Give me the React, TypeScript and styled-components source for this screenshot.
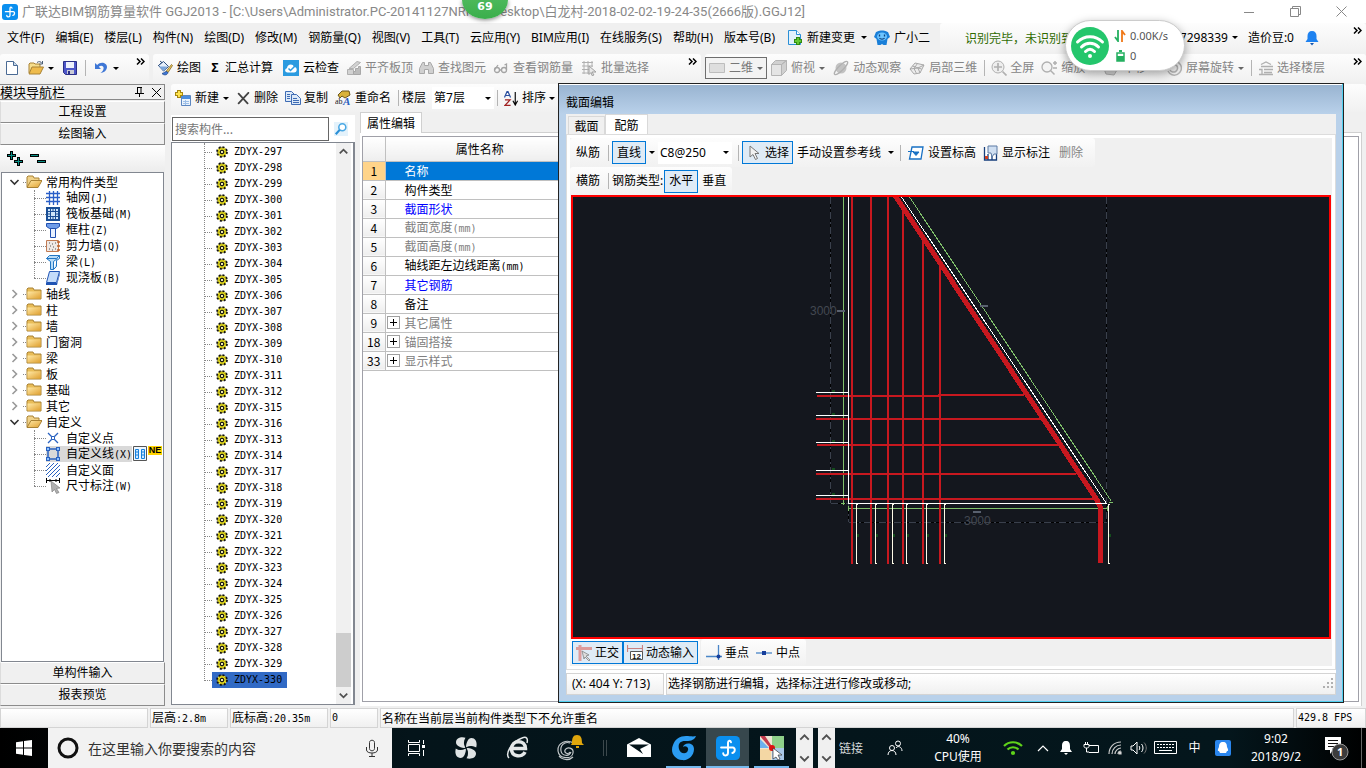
import React from "react";
import styled, { createGlobalStyle, css } from "styled-components";

const sans = `"Noto Sans", "Noto Sans CJK SC", sans-serif`;
const song = `"Noto Sans CJK SC", sans-serif`;

const Global = createGlobalStyle`
  *, *::before, *::after { box-sizing: border-box; }
  body { margin: 0; font: 12px/16px ${sans}; color: #000; background: #f0f0f0; }
  button, input, select { font: inherit; color: inherit; margin: 0; padding: 0; border: 0; background: none; border-radius: 0; }
  ul { list-style: none; margin: 0; padding: 0; }
  svg { display: block; flex: none; }
`;

/* ---------- shared parts ---------- */

const Page = styled.div`
  position: relative;
  display: flex;
  flex-direction: column;
  min-height: 100vh;
  overflow: hidden;
`;

const Mono = styled.span`
  font-family: "DejaVu Sans Mono", monospace;
  font-size: 10px;
`;

const Strip = styled.div<{ $grow?: boolean; $min?: number }>`
  display: flex;
  align-items: center;
  min-width: ${(p) => p.$min ?? 0}px;
  white-space: nowrap;
  background: linear-gradient(#fdfdfd, #f1f1f1);
  border-radius: 3px;
  ${(p) => p.$grow && css`flex: 1;`}
`;

const Tool = styled.button<{ $on?: boolean; $tight?: boolean }>`
  display: flex;
  align-items: center;
  flex: none;
  gap: ${(p) => (p.$tight ? 3 : 4)}px;
  height: 24px;
  padding: 0 ${(p) => (p.$tight ? 3 : 4)}px;
  white-space: nowrap;
  &:disabled { color: #858585; }
  ${(p) =>
    p.$on &&
    css`
      background: #dfebf6;
      border: 1px solid #0078d7;
      height: 23px;
    `}
`;

const Sep = styled.span`
  flex: none;
  width: 1px;
  height: 16px;
  margin: 0 3px;
  background: #b4b4b4;
`;

const Spacer = styled.span`
  flex: 1;
`;

const Gap = styled.span<{ $w: number }>`
  flex: none;
  width: ${(p) => p.$w}px;
`;

const MoreButton = styled.button`
  display: grid;
  place-items: center;
  flex: none;
  align-self: flex-start;
  width: 18px;
  height: 15px;
`;

const More = () => (
  <MoreButton aria-label="更多">
    <svg width="9" height="7" viewBox="0 0 9 7">
      <path d="M1 .5l3 3-3 3M5 .5l3 3-3 3" fill="none" stroke="#000" strokeWidth="1.500" />
    </svg>
  </MoreButton>
);

const Combo = styled.span<{ $w: number; $framed?: boolean }>`
  display: flex;
  align-items: center;
  flex: none;
  width: ${(p) => p.$w}px;
  height: 22px;
  padding-right: 3px;
  background: #fff;
  ${(p) =>
    p.$framed &&
    css`
      background: #f3f3f3;
      border: 1px solid #6e6e6e;
      color: #777;
      padding-left: 3px;
      gap: 2px;
    `}
  select {
    appearance: none;
    flex: 1;
    min-width: 0;
    padding-left: 2px;
    outline: 0;
  }
`;

const Caret = ({ c = "#000" }: { c?: string }) => (
  <svg width="6" height="3" viewBox="0 0 6 3">
    <path d="M0 0h6L3 3z" fill={c} />
  </svg>
);

/* ---------- icons ---------- */

const shapes: Record<string, React.ReactNode> = {
  app: (
    <>
      <rect width="16" height="16" rx="3" fill="#0a8fef" />
      <path d="M10 4.200C9.600 2.700 8 2.900 8 4.500v6.700c0 2.400-3.200 2.200-3.200.3M8 7.700h3.200c1.800 0 1.800 3.200-.3 3.600M8 7.700H3.400" fill="none" stroke="#fff" strokeWidth="1.300" strokeLinecap="round" />
    </>
  ),
  file: (
    <>
      <path d="M2.500 1.500h7l4 4v9h-11z" fill="#fff" stroke="#4a6a94" />
      <path d="M9.500 1.500v4h4" fill="#c8d8ea" stroke="#4a6a94" />
    </>
  ),
  open: (
    <>
      <path d="M1 13V4l1-1h4l1 1h5v3" fill="#f5dd8c" stroke="#a98234" />
      <path d="M1 14l3-7h11.500l-3.500 7z" fill="#eebb4c" stroke="#a98234" />
      <path d="M9 2.500c2-1.500 4-1 5 1M14.500 1v3h-3" fill="none" stroke="#4b5e74" />
    </>
  ),
  save: (
    <>
      <path d="M1.500 1.500h13v13h-11l-2-2z" fill="#4d56c8" stroke="#2b2f86" />
      <path d="M4 2h8v6H4z" fill="#eef1fb" />
      <path d="M5 10h7v4H5z" fill="#c9cbd6" />
      <path d="M6 11h2v3H6z" fill="#2b2f86" />
    </>
  ),
  undo: (
    <path d="M2 3v6h6L5.800 6.800C8 4.500 11.500 6 10.500 9c-.4 1.600-1.500 3-3 4 4-.6 6.500-3 6.500-6 0-4.500-6.500-6-9.800-2z" fill="#3f77d6" />
  ),
  paint: (
    <>
      <path d="M3 1l5 4M1 6l4-4" stroke="#2d4f80" fill="none" />
      <path d="M1.500 5.500l5-4 5 5-5 4.500z" fill="#e6effa" stroke="#2d4f80" />
      <path d="M2 6.500h8.500L6.500 11z" fill="#7ba6dc" />
      <path d="M14.500 4.500l1 1-4.500 7-2-1z" fill="#f0cc62" stroke="#7d6320" strokeWidth=".8" />
      <path d="M5 13.500c2-.5 3-2 4.500-2l1.500 1c-.5 3-4.500 3-6 1z" fill="#3f77d6" stroke="#1d4080" strokeWidth=".7" />
    </>
  ),
  cloud: (
    <>
      <rect width="16" height="16" fill="#2b9be0" />
      <path d="M4.500 12.500c-3 0-3-4-.5-4.200C4 4 10 3 11 7c3.500-.3 3.800 5.500 0 5.500z" fill="#fff" />
      <path d="M5.500 8.500l2 2 4-4" fill="none" stroke="#2b9be0" strokeWidth="1.500" />
    </>
  ),
  align: (
    <>
      <path d="M3 8.500l8-7 3.500 1-7 6zM1.500 9.500h6v5h-6z" fill="#d2d2d2" stroke="#b0b0b0" />
      <path d="M7.500 11.500h2v-3h3v-2h2v8h-7z" fill="#bcbcbc" stroke="#a8a8a8" />
    </>
  ),
  find: (
    <path d="M3.500 2.500h2v3h4v-3h2l3 6v5h-5v-4h-4v4h-5v-5z" fill="#d0d0d0" stroke="#a8a8a8" />
  ),
  glasses: (
    <g fill="none" stroke="#a4a4a4" strokeWidth="1.300">
      <circle cx="4" cy="10" r="2.500" />
      <circle cx="11" cy="10" r="2.500" />
      <path d="M6.500 10h2M1.500 10L5 5M13.500 10V4l-2 1" />
    </g>
  ),
  batch: (
    <>
      <path d="M1 2.500h11M1 6h11M1 9.500h7M1 13h7M3 1v13M7 1v13M11 1v6" stroke="#b0b0b0" fill="none" />
      <path d="M8 6l7 6h-4l2 3-2 .5-1-3-2 2z" fill="#e8e8e8" stroke="#a0a0a0" />
    </>
  ),
  plane: <path d="M.5 3.500h15v9H.5z" fill="#dedede" stroke="#bdbdbd" />,
  cube: (
    <>
      <path d="M.5 4.500h10v11H.5z" fill="#e4e4e4" stroke="#b4b4b4" />
      <path d="M.5 4.500l4-4h11l-5 4zM10.500 4.500l5-4v10l-5 5z" fill="#d0d0d0" stroke="#b4b4b4" />
    </>
  ),
  orbit: (
    <>
      <circle cx="8" cy="8" r="5.500" fill="#c2c2c2" />
      <ellipse cx="8" cy="8" rx="9" ry="2.500" transform="rotate(-45 8 8)" fill="none" stroke="#b0b0b0" strokeWidth="1.300" />
    </>
  ),
  local: (
    <path d="M1 9l5-6 9 2-4 8-6 1zM1 9l8-1 2 5M9 8l6-3M3.500 6l9 3M8.500 3.500L5 8.500l2.500 5" fill="#ececec" stroke="#a9a9a9" />
  ),
  full: (
    <>
      <circle cx="7" cy="7" r="6" fill="#eee" stroke="#b0b0b0" />
      <path d="M7 3v8M3 7h8M11.500 11.500l4 4" stroke="#b0b0b0" strokeWidth="1.700" />
    </>
  ),
  zoom: (
    <>
      <circle cx="6" cy="7" r="5" fill="#f4f4f4" stroke="#b0b0b0" strokeWidth="1.300" />
      <path d="M9.500 10.500l4 4M12 3h4M14 1v4M12 8h4" stroke="#b0b0b0" strokeWidth="1.500" />
    </>
  ),
  pan: <path d="M3 14l-2-5 2-1 2 2V3h2v4h6l1 3-3 5z" fill="#d6d6d6" stroke="#b0b0b0" />,
  rotate: (
    <path d="M5 2a7 7 0 1 1-3 9M5 5a4 4 0 1 1-1 5M2 7V2h5" fill="none" stroke="#b6b6b6" strokeWidth="1.500" />
  ),
  floors: <path d="M3 4.500L8 2l5 2.500M3 6.500h12M1 9.500h3v5M6 9.500h9M6 12.500h8M1 14.500h14" fill="none" stroke="#b0b0b0" strokeWidth="1.300" />,
  fresh: (
    <>
      <path d="M6.500 5.500h9v10h-9z" fill="#eaf3fc" stroke="#5c86c0" />
      <path d="M7 6h8v3H7z" fill="#4a8de0" />
      <path d="M8 11.500h6M8 13.500h6M10.500 10v5" stroke="#9dbfe8" />
      <path d="M4 0v8M0 4h8" stroke="#a58610" strokeWidth="4" />
      <path d="M4 1v6M1 4h6" stroke="#ffe34d" strokeWidth="2" />
    </>
  ),
  del: <path d="M2 2l11 12M14 1L2 14" stroke="#444" strokeWidth="2.200" strokeLinecap="round" />,
  copy: (
    <g fill="#dce9f8" stroke="#3f6cb4">
      <path d="M.5 1.500h6l3 3v7h-9z" />
      <path d="M6.500 4.500h5l4 4v6h-9z" />
      <path d="M2 4.500h3M2 6.500h3M2 8.500h3M8 8.500h4M8 10.500h6M8 12.500h6" />
    </g>
  ),
  rename: (
    <>
      <path d="M3 5l4-4h7l1 4-5 3-3-2-2 2z" fill="#d9b23a" stroke="#6c561b" />
      <text x="0" y="14" fontSize="8" fontFamily="Liberation Serif" fill="#222">ab</text>
      <text x="8" y="15" fontSize="11" fontWeight="bold" fontStyle="italic" fontFamily="Liberation Serif" fill="#2a5fc0">A</text>
    </>
  ),
  sort: (
    <>
      <path d="M.5 7L3.500 0h.5L7 7M1.800 4.800h4" stroke="#2a4fa0" fill="none" strokeWidth="1.300" />
      <path d="M1 9.500h5.500L1 15.300h6" stroke="#a02020" fill="none" strokeWidth="1.300" />
      <path d="M12 1v13M9.500 10.500L12 15l2.500-4.500" stroke="#000" fill="none" strokeWidth="1.200" />
    </>
  ),
  newdoc: (
    <>
      <path d="M1.500.5h8l4 4v10h-12z" fill="#e2f1fc" stroke="#2a8fd6" />
      <path d="M9.500.5v4h4" fill="#fff" stroke="#2a8fd6" />
      <path d="M11 7v8M7 11h8" stroke="#2f8a12" strokeWidth="4" />
      <path d="M11 8v6M8 11h6" stroke="#66c832" strokeWidth="2" />
    </>
  ),
  mascot: (
    <>
      <path d="M2 2c1 0 2-1.500 6-1.500S13 2 14 2l2 5-2.500 2-1 6H9.500l-1.500-1-1.500 1h-3l-1-6L0 7z" fill="#1a7fd8" />
      <ellipse cx="8" cy="6.500" rx="5" ry="4" fill="#6cc4ff" />
      <path d="M5.500 4.500v2M10.500 4.500v2M5.500 8c1 1.500 4 1.500 5 0" stroke="#0b3f7a" fill="none" strokeWidth="1.300" />
    </>
  ),
  bell: (
    <>
      <path d="M8 1c3 0 4.500 2 4.500 5v3l2 3h-13l2-3V6C3.500 3 5 1 8 1z" fill="#1e82f0" />
      <path d="M6 13h4l-2 2.500z" fill="#1557b0" />
    </>
  ),
  search: (
    <>
      <rect width="16" height="16" fill="#e4f2fb" />
      <circle cx="9.500" cy="6" r="4" fill="#fff" stroke="#4aa8e4" strokeWidth="1.800" />
      <path d="M6.500 9L2 14" stroke="#2a8fd6" strokeWidth="2.500" />
    </>
  ),
  folder: (
    <>
      <path d="M1 13V3l1-1h5l1 2h7v9z" fill="#e9bd58" stroke="#a98234" />
      <path d="M1.500 5.500h13v7h-13z" fill="url(#gold)" />
    </>
  ),
  folderOpen: (
    <>
      <path d="M1 13V3l1-1h5l1 2h5v2" fill="#f0d28a" stroke="#a98234" />
      <path d="M1 13.500l4-7h11l-4 7z" fill="url(#gold)" stroke="#a98234" />
    </>
  ),
  grid: (
    <path d="M0 3.500h14M0 7.500h14M0 11.500h14M3.500 1v14M7.500 1v14M11.500 1v14" stroke="#2a5fc8" strokeWidth="1.300" fill="none" />
  ),
  raft: (
    <>
      <path d="M1 2h12v12H1z" fill="#cfe6fa" stroke="#1b4f96" strokeWidth="2" />
      <path d="M4.500 5.500h5v5h-5zM1 5.500h4M1 8h4M1 10.500h4M9 5.500h4M9 8h4M9 10.500h4M4.500 2v4M7 2v4M9.500 2v4M4.500 10v4M7 10v4M9.500 10v4" fill="none" stroke="#1b4f96" />
    </>
  ),
  column: (
    <>
      <path d="M.5 1.500h13v3l-3 2h-7l-3-2z" fill="#6d9be8" stroke="#1f4fb0" />
      <path d="M4.500 6.500h5v9h-5z" fill="#e8f1ff" stroke="#1f4fb0" />
    </>
  ),
  wall: (
    <>
      <path d="M.5 2.500h12v11H.5z" fill="#efe8e4" stroke="#c07a52" />
      <path d="M11 4h3M11 8h3M11 12h3" stroke="#c0602a" strokeWidth="1.500" />
      <path d="M3 5h1M6 6h1M9 5h1M4 8h1M7 9h1M3 11h1M6 12h1M9 11h1" stroke="#555" />
    </>
  ),
  beam: (
    <path d="M.5 4.500l3-3h10l-3 3zM.5 4.500l4 3v8h3v-8l4-3M7.500 15.500l3-3v-6l3-2v-3" fill="#b8dcf8" stroke="#2176c4" />
  ),
  slab: (
    <>
      <path d="M3.500 1.500h10l-3 11H.5z" fill="#c4dcfa" stroke="#2054b4" />
      <path d="M0 13h11v2H0zM11 13l3-11v2l-3 11z" fill="#2054b4" />
    </>
  ),
  point: (
    <>
      <path d="M2 3l10 10M12 3L2 13" stroke="#2a62c0" strokeWidth="1.300" />
      <path d="M5.500 6.500h3v3h-3z" fill="#fff" stroke="#2a62c0" />
    </>
  ),
  line: (
    <>
      <path d="M2 3h10v10H2z" fill="none" stroke="#2a62c0" strokeWidth="1.500" />
      <path d="M0 1h4v4H0zM10 1h4v4h-4zM0 11h4v4H0zM10 11h4v4h-4z" fill="#2a62c0" />
      <path d="M1 2h2v2H1zM11 2h2v2h-2zM1 12h2v2H1zM11 12h2v2h-2z" fill="#8fc4ff" />
    </>
  ),
  face: (
    <path d="M0 5l4-4M0 9l8-8M0 13l12-12M2 15L14 3M6 15l8-8M10 15l4-4" stroke="#2a62c0" fill="none" />
  ),
  dim: (
    <>
      <path d="M.5 0v5M13.500 0v5M1 2.500h12M4 1v3M10 1v3" stroke="#000" fill="none" />
      <path d="M5 3l9 7-3.500.5 2.500 4-2.500 1-2-4L6 14z" fill="#b0b0b0" stroke="#777" strokeWidth=".6" />
    </>
  ),
  book: (
    <>
      <path d="M1.500.5h13v14h-13z" fill="#eef7ff" stroke="#555" />
      <path d="M3.500 3.500h3v9h-3zM9.500 3.500h3v9h-3z" fill="#cfe8ff" stroke="#1580dc" />
      <path d="M4 6h2M4 9h2M10 6h2M10 9h2" stroke="#1580dc" />
    </>
  ),
  gear: (
    <>
      <circle cx="8" cy="8" r="6.500" fill="#f0e62a" stroke="#111" strokeWidth="2.600" strokeDasharray="2.600 2.500" />
      <path d="M8 1v14M1 8h14M3.500 3.500l9 9M12.500 3.500l-9 9" stroke="#222" strokeWidth="1" />
      <circle cx="8" cy="8" r="4.500" fill="none" stroke="#e8dc10" strokeWidth="1.200" />
      <circle cx="8" cy="8" r="2.200" fill="#f4f0b0" stroke="#111" strokeWidth="1.300" />
    </>
  ),
  cursor: (
    <path d="M4 1v11l3-2.500 2.500 5 2-1-2.500-5h4z" fill="#f2f2f2" stroke="#777" />
  ),
  level: (
    <>
      <path d="M4 2h11l-2 12H1.500z" fill="#fff" stroke="#1770c4" strokeWidth="1.300" />
      <path d="M0 6.500h6M5 7h6l-3 3.500z" fill="#1770c4" stroke="#1770c4" />
    </>
  ),
  note: (
    <>
      <path d="M1.500 2v13h12V9M5 9v6M9 9v6" fill="#fff" stroke="#173f7c" strokeWidth="1.300" />
      <path d="M5 1h9v8h-3l-2 3-1-4H5z" fill="#cfdff2" stroke="#5c7ba4" />
      <path d="M2 11h3v3H2z" fill="#d04020" />
    </>
  ),
  ortho: (
    <>
      <path d="M0 3.500h16M4 0v16" stroke="#dd9c9c" strokeWidth="3" />
      <path d="M6 6l7 4-3 1 4 4-1 1-4-4-1 2z" fill="#ddd" stroke="#777" strokeWidth=".7" />
    </>
  ),
  dyn: (
    <>
      <path d="M.500 0v7M15.500 0v7M1 3.500h14" stroke="#c98080" strokeWidth="1.200" />
      <path d="M3.500 6.500h12v8h-12z" fill="#fff" stroke="#555" />
      <text x="5" y="14" fontSize="8" fontWeight="bold" fontFamily="Liberation Sans" fill="#111">12</text>
    </>
  ),
  foot: (
    <>
      <path d="M0 11.500h16M12.500 0v15" stroke="#4a86c8" strokeWidth="1.300" />
      <circle cx="12.500" cy="11.500" r="2" fill="#173f9c" />
    </>
  ),
  mid: (
    <>
      <path d="M0 8h16" stroke="#4a86c8" strokeWidth="1.300" />
      <path d="M6 6h4v4H6z" fill="#173f9c" />
    </>
  ),
};

const Icon = ({ n, s = 16 }: { n: string; s?: number }) => (
  <svg width={s} height={s} viewBox="0 0 16 16" aria-hidden="true">
    {shapes[n]}
  </svg>
);

/* ---------- title and menus ---------- */

const TitleBar = styled.header`
  display: flex;
  align-items: center;
  height: 23px;
  padding: 0 4px 0 2px;
  gap: 4px;
  background: #fff;
  color: #888;
  white-space: nowrap;
  h1 { font: 13px/18px Roboto, "Noto Sans CJK SC", sans-serif; margin: 0; flex: 1; }
`;

const WinButton = styled.button`
  display: grid;
  place-items: center;
  width: 42px;
  height: 20px;
`;

const MenuRow = styled.div`
  display: flex;
  height: 31px;
  padding-bottom: 2px;
  gap: 6px;
`;

const Menus = styled.nav`
  display: flex;
  align-items: center;
  flex: none;
  white-space: nowrap;
  padding-left: 1px;
`;

const MenuItem = styled.button`
  padding: 0 5px 0 6px;
  height: 24px;
`;

const Green = styled.span`
  color: #2f6b00;
  padding-left: 25px;
  font-family: ${song};
`;

const ToolRow = styled.div`
  display: flex;
  height: 30px;
  padding: 0 0 2px;
  gap: 4px;
`;

const Sigma = styled.b`
  width: 12px;
  text-align: center;
`;

const menus = ["文件(F)", "编辑(E)", "楼层(L)", "构件(N)", "绘图(D)", "修改(M)", "钢筋量(Q)", "视图(V)", "工具(T)", "云应用(Y)", "BIM应用(I)", "在线服务(S)", "帮助(H)", "版本号(B)"];

/* ---------- body ---------- */

const Body = styled.main`
  position: relative;
  display: flex;
  flex: 1;
  gap: 6px;
`;

const Nav = styled.aside`
  display: flex;
  flex-direction: column;
  flex: none;
  width: 165px;
`;

const NavHead = styled.div`
  display: flex;
  align-items: center;
  height: 16px;
  margin-bottom: 1px;
  border: 1px solid #888;
  border-left: 0;
  padding-right: 3px;
  gap: 8px;
  font-size: 13px;
  line-height: 14px;
  span { flex: 1; }
`;

const NavButton = styled.button`
  height: 22px;
  text-align: center;
  border: 1px solid;
  border-color: #fff #8c8c8c #8c8c8c #dcdcdc;
`;

const NavTools = styled.div`
  display: flex;
  align-items: center;
  height: 27px;
  padding-left: 7px;
  gap: 6px;
  background: linear-gradient(#fff, #ececec);
`;

const TreeBox = styled.ul`
  flex: 1;
  margin: 0 1px;
  padding: 1px 0 0 5px;
  background: #fff;
  border: 1px solid #828790;
`;

const Branch = styled.button`
  display: flex;
  align-items: center;
  height: 16px;
  font-family: ${song};
  white-space: nowrap;
  span:last-child { margin-left: 4px; }
`;

const Dots = styled.span<{ $w: number }>`
  width: ${(p) => p.$w}px;
  border-top: 1px dotted #888;
`;

const Leaves = styled.ul`
  margin-left: 27px;
  position: relative;
  &::before {
    content: "";
    position: absolute;
    left: 0;
    top: 0;
    bottom: 8px;
    border-left: 1px dotted #888;
  }
`;

const LeafLabel = styled.span<{ $on?: boolean }>`
  display: flex;
  align-items: center;
  gap: 4px;
  height: 16px;
  ${(p) => p.$on && "background: #d9d9d9;"}
`;

const Leaf = styled.button`
  display: flex;
  align-items: center;
  height: 16px;
  font-family: ${song};
  white-space: nowrap;
`;

const NewTag = styled.em`
  align-self: flex-start;
  width: 14px;
  overflow: hidden;
  font: bold 9px/9px "Liberation Sans", sans-serif;
  background: #ffd400;
`;

const common: [string, string, string][] = [
  ["grid", "轴网", "(J)"],
  ["raft", "筏板基础", "(M)"],
  ["column", "框柱", "(Z)"],
  ["wall", "剪力墙", "(Q)"],
  ["beam", "梁", "(L)"],
  ["slab", "现浇板", "(B)"],
];
const folders = ["轴线", "柱", "墙", "门窗洞", "梁", "板", "基础", "其它"];
const custom: [string, string, string][] = [
  ["point", "自定义点", ""],
  ["line", "自定义线", "(X)"],
  ["face", "自定义面", ""],
  ["dim", "尺寸标注", "(W)"],
];

const Chevron = ({ open }: { open?: boolean }) => (
  <svg width="16" height="16" viewBox="0 0 16 16">
    {open ? (
      <path d="M3.500 6l4 4 4-4" fill="none" stroke="#333" strokeWidth="1.600" />
    ) : (
      <path d="M5.500 4l4 4-4 4" fill="none" stroke="#999" strokeWidth="1.600" />
    )}
  </svg>
);

const Folder = ({ name, open }: { name: string; open?: boolean }) => (
  <Branch>
    <Chevron open={open} />
    <Dots $w={3} />
    <Icon n={open ? "folderOpen" : "folder"} />
    <span>{name}</span>
  </Branch>
);

const LeafRow = ({ item, on }: { item: [string, string, string]; on?: boolean }) => (
  <li>
    <Leaf>
      <Dots $w={12} />
      <LeafLabel $on={on}>
        <Icon n={item[0]} />
        <span>
          {item[1]}
          {item[2] && <Mono>{item[2]}</Mono>}
        </span>
      </LeafLabel>
      {on && (
        <>
          <Icon n="book" />
          <NewTag>NE</NewTag>
        </>
      )}
    </Leaf>
  </li>
);

const Work = styled.div`
  display: flex;
  flex-direction: column;
  flex: 1;
  min-width: 0;
`;

const WorkBar = styled(Strip)`
  height: 28px;
`;

const WorkRow = styled.div`
  display: flex;
  flex: 1;
  gap: 5px;
`;

const ListPane = styled.section`
  display: flex;
  flex-direction: column;
  flex: none;
  width: 184px;
  padding-top: 3px;
`;

const SearchRow = styled.div`
  display: flex;
  align-items: center;
  height: 27px;
  padding-left: 1px;
  gap: 1px;
  background: #fff;
  input {
    width: 157px;
    height: 24px;
    padding: 0 2px;
    border: 1px solid #666;
    font-family: ${song};
    outline: 0;
    &::placeholder { color: #777; opacity: 1; }
  }
`;

const ListBox = styled.div`
  display: flex;
  flex: 1;
  margin-bottom: 1px;
  background: #fff;
  border: 1px solid #828790;
  border-right-width: 2px;
`;

const Items = styled.ul`
  position: relative;
  flex: 1;
  padding: 1px 0 0 32px;
  &::before {
    content: "";
    position: absolute;
    left: 32px;
    top: 0;
    height: 536px;
    border-left: 1px dotted #888;
  }
`;

const ItemButton = styled.button`
  display: flex;
  align-items: center;
  height: 16px;
`;

const ItemLabel = styled.span<{ $on?: boolean }>`
  display: flex;
  align-items: center;
  height: 16px;
  gap: 6px;
  padding: 0 5px 0 4px;
  ${(p) => p.$on && "background: #316ac5;"}
`;

const ScrollBar = styled.div`
  display: flex;
  flex-direction: column;
  align-items: center;
  flex: none;
  width: 15px;
  margin-right: 2px;
  background: #f0f0f0;
`;

const Thumb = styled.span`
  width: 15px;
  height: 54px;
  background: #cdcdcd;
`;

const Arrow = ({ up, w = 15 }: { up?: boolean; w?: number }) => (
  <svg width={w} height="17" viewBox="0 0 16 16">
    <path d={up ? "M4 10l4-4 4 4" : "M4 6l4 4 4-4"} fill="none" stroke="#505050" strokeWidth="1.800" />
  </svg>
);

const range = (a: number, b: number) => Array.from({ length: b - a + 1 }, (_, i) => a + i);
const members = [...range(297, 312), 315, 316, 313, 314, ...range(317, 330)];

const PropPane = styled.section`
  flex: 1;
  display: flex;
  flex-direction: column;
  min-width: 0;
  padding-right: 4px;
`;

const PropTabs = styled.div`
  height: 21px;
  border-bottom: 1px solid #d0d0d0;
  button {
    height: 21px;
    width: 62px;
    background: #fff;
    border: 1px solid #d0d0d0;
    border-bottom: 0;
    font-family: ${song};
  }
`;

const PropBody = styled.div`
  flex: 1;
  padding: 3px 2px 4px;
  background: #fff;
  border-right: 1px solid #d0d0d0;
`;

const PropFrame = styled.div`
  height: 100%;
  background: #fff;
  border: 1px solid #a0a0a8;
`;

const Table = styled.table`
  border-collapse: collapse;
  width: 212px;
  table-layout: fixed;
  font-family: ${song};
  th, td { border: 1px solid #c0c0c0; border-left: 0; padding: 0; height: 19px; line-height: 16px; font-weight: normal; }
  thead th { height: 24px; border-top: 0; background: linear-gradient(#fff, #eee); }
  thead th:first-child { width: 22px; }
`;

const NumCell = styled.th<{ $on?: boolean }>`
  background: ${(p) => (p.$on ? "#ffd48a" : "linear-gradient(#fff, #eee)")};
`;

const NameCell = styled.td<{ $c: string; $on?: boolean }>`
  color: ${(p) => p.$c};
  ${(p) => p.$on && "background: #0078d7;"}
  > div { display: flex; align-items: center; gap: 5px; padding-left: 1px; }
`;

const PlusBox = styled.button<{ $hide?: boolean }>`
  display: grid;
  place-items: center;
  width: 13px;
  height: 13px;
  border: 1px solid #a0a0a0;
  ${(p) => p.$hide && "visibility: hidden;"}
`;

const props: [number, string, string, string][] = [
  [1, "名称", "", "#fff"],
  [2, "构件类型", "", "#000"],
  [3, "截面形状", "", "#0000ff"],
  [4, "截面宽度", "(mm)", "#808080"],
  [5, "截面高度", "(mm)", "#808080"],
  [6, "轴线距左边线距离", "(mm)", "#000"],
  [7, "其它钢筋", "", "#0000ff"],
  [8, "备注", "", "#000"],
  [9, "其它属性", "", "#808080"],
  [18, "锚固搭接", "", "#808080"],
  [33, "显示样式", "", "#808080"],
];

/* ---------- section editor window ---------- */

const Editor = styled.section`
  position: absolute;
  left: 558px;
  right: 22px;
  top: -1px;
  bottom: 3px;
  display: flex;
  flex-direction: column;
  padding: 0 7px 7px;
  border: 1px solid #222;
  background: #b9d1ea;
  box-shadow: inset -1px -1px #4fd0f0, inset 0 1px #fff;
`;

const EditorTitle = styled.h2`
  height: 29px;
  margin: 1px -6px 0 -7px;
  padding: 9px 0 0 7px;
  font: 12px/18px ${sans};
  background: linear-gradient(#99b4d1, #b9d1ea);
`;

const Tabs = styled.div`
  display: flex;
  align-items: flex-end;
  height: 20px;
  padding-left: 2px;
  background: #f0f0f0;
`;

const Tab = styled.button<{ $on?: boolean }>`
  width: ${(p) => (p.$on ? 43 : 37)}px;
  height: ${(p) => (p.$on ? 20 : 18)}px;
  border: 1px solid #d9d9d9;
  border-bottom: 0;
  background: ${(p) => (p.$on ? "#fff" : "#f0f0f0")};
  font-family: ${song};
`;

const Pane = styled.div`
  flex: 1;
  display: flex;
  flex-direction: column;
  align-items: stretch;
  padding: 3px;
  background: #f0f0f0;
  border: 1px solid #dcdcdc;
  box-shadow: inset 0 0 0 3px #fff;
`;

const EdBar = styled.div<{ $h: number }>`
  display: flex;
  align-items: center;
  flex: none;
  height: ${(p) => p.$h}px;
  gap: 1px;
  > div { height: 100%; padding: 0 2px; }
`;

const Label = styled.span`
  padding: 0 5px 0 4px;
`;

const Canvas = styled.div`
  flex: 1;
  min-height: 0;
  margin: 0 1px;
  border: 2px solid #ff0000;
  background: #14171e;
  svg { width: 100%; height: 100%; }
`;

const EdStatus = styled.div`
  display: flex;
  gap: 2px;
  height: 25px;
  padding-top: 3px;
  background: #fff;
`;

const Cell = styled.div<{ $w?: number; $mono?: boolean }>`
  display: flex;
  align-items: center;
  justify-content: space-between;
  ${(p) => (p.$w ? `width: ${p.$w}px;` : "flex: 1;")}
  min-width: 0;
  padding: 0 1px;
  border: 1px solid #d4d4d4;
  background: linear-gradient(#fff, #f0f0f0);
  white-space: pre;
  font-family: ${(p) => (p.$mono ? song : sans)};
`;

const Coords = styled.span`
  padding-left: 4px;
`;

const redX: [number, number][] = [[852, 197], [871, 197], [888, 197], [903, 208], [923, 240], [940, 266]];
const redY: [number, number, number][] = [[817, 396, 939], [816, 419, 1042], [817, 445, 1058], [816, 474, 1076], [816, 499, 1098]];
const stubY = [392, 415, 442, 470, 495];
const stubX = [856, 875, 892, 906, 926, 944, 1108];

const Drawing = () => (
  <svg shapeRendering="crispEdges">
    <g transform="translate(-573 -197)">
      <g stroke="#000" fill="none">
        <path d="M830.500 197v306M1106.500 197v325M848.500 504v18M848.500 522.500h258M830.500 503.500h18" />
      </g>
      <g stroke="#3a404c" fill="none" strokeDasharray="7 3 2 3">
        <path d="M830.500 197v306M1106.500 197v325M848.500 504v18M848.500 522.500h258M830.500 503.500h18" />
      </g>
      <g stroke="#7fbf6a" fill="none">
        <path d="M843.500 197v308M848 508.500h260M909.500 197L1111.500 501.500M1109 502h4M841 503.500h4M848.500 506v5M1107.500 506v5" />
      </g>
      <g stroke="#c8181f" strokeWidth="2" fill="none">
        {redX.map(([x, y]) => (
          <path key={x} d={`M${x} ${y}V564`} />
        ))}
        {redY.map(([a, y, b]) => (
          <path key={y} d={`M${a} ${y}H${b}`} />
        ))}
        <path d="M938 395H1024" />
      </g>
      <path d="M895.500 196L1097 500L1100.500 508V563" stroke="#c8181f" strokeWidth="5" fill="none" />
      <g fill="#134d1c">
        {stubY.map((y) => (
          <rect key={y} x="832" y={y - 2} width="3" height="2" />
        ))}
        {stubX.map((x) => (
          <rect key={x} x={x + 1} y="534" width="2" height="3" />
        ))}
      </g>
      <g stroke="#fff" fill="none">
        <path d="M848.500 197v307M848 503.500h259M901.500 197L1106.500 503.500" />
        {stubY.map((y) => (
          <path key={y} d={`M816 ${y}.500H849`} />
        ))}
      </g>
      <g stroke="#fffbe8" fill="none">
        {stubX.map((x) => (
          <path key={x} d={`M${x + 2} 504.500h-1.500V563.500h1.500`} />
        ))}
      </g>
      <g fill="#59616f">
        <rect x="837" y="310" width="8" height="2" />
        <rect x="980" y="305" width="8" height="2" />
        <rect x="973" y="511" width="8" height="2" />
      </g>
      <g fill="#434851" fontFamily="Liberation Sans, sans-serif" fontSize="12">
        <text x="810" y="315">3000</text>
        <text x="964" y="525">3000</text>
      </g>
    </g>
  </svg>
);

/* ---------- status bar and taskbar ---------- */

const Status = styled.footer`
  display: flex;
  gap: 2px;
  height: 22px;
  padding: 2px 0 0;
`;

const Taskbar = styled.footer`
  display: flex;
  align-items: stretch;
  height: 40px;
  background: linear-gradient(90deg, #000 0, #04141a 30%, #04161c 90%, #000);
  color: #fff;
`;

const Start = styled.button`
  display: grid;
  place-items: center;
  width: 48px;
`;

const TaskSearch = styled.label`
  display: flex;
  align-items: center;
  width: 344px;
  padding: 0 12px 0 8px;
  gap: 8px;
  background: #f2f2f2;
  color: #333;
  input { flex: 1; min-width: 0; font-size: 14px; outline: 0; font-family: ${song}; }
  input::placeholder { color: #333; opacity: 1; }
`;

const Task = styled.button<{ $w: number; $run?: boolean; $on?: boolean }>`
  display: grid;
  place-items: center;
  flex: none;
  width: ${(p) => p.$w}px;
  ${(p) => p.$on && "background: #37474d;"}
  ${(p) => p.$run && "box-shadow: inset 0 -2px #76b9ed;"}
`;

const MiniScroll = styled.div`
  display: flex;
  flex-direction: column;
  justify-content: space-between;
  flex: none;
  width: 17px;
  margin-right: 5px;
  background: #f0f0f0;
  padding: 1px 0;
  & + & { margin-right: 0; }
`;

const TwoLine = styled.div<{ $w: number }>`
  flex: none;
  width: ${(p) => p.$w}px;
  padding-top: 2px;
  text-align: center;
  line-height: 18px;
  white-space: pre-line;
`;

const Links = styled.button`
  width: 32px;
  margin-right: 8px;
  font-family: ${song};
  color: #d5d9da;
`;

const Edge = styled.span`
  flex: none;
  width: 5px;
  border-left: 1px solid #666;
`;

/* ---------- floating gadgets ---------- */

const Ball = styled.div`
  position: absolute;
  left: 462px;
  top: 0;
  width: 46px;
  height: 19px;
  padding-top: 1px;
  text-align: center;
  font: bold 11px/12px "DejaVu Sans", sans-serif;
  color: #fff;
  background: linear-gradient(#4cb85a, #3aae4b);
  border-radius: 0 0 23px 23px / 0 0 19px 19px;
  box-shadow: 0 1px 4px rgba(0, 0, 0, 0.5);
`;

const Pill = styled.div`
  position: absolute;
  right: 181px;
  top: 20px;
  display: flex;
  align-items: center;
  width: 120px;
  height: 51px;
  padding-left: 5px;
  gap: 5px;
  color: #555;
  background: #fff;
  border: 1px solid #ccc;
  border-radius: 26px;
  box-shadow: 0 3px 10px rgba(0, 0, 0, 0.35);
  ul { font: 11px/20px ${sans}; white-space: nowrap; }
  li { display: flex; align-items: center; gap: 4px; }
`;

export default function App() {
  return (
    <Page>
      <Global />
      <svg width="0" height="0" style={{ position: "absolute" }}>
        <linearGradient id="gold" x1="0" y1="0" x2="1" y2="1">
          <stop offset="0" stopColor="#ffe9a6" />
          <stop offset="1" stopColor="#e0a030" />
        </linearGradient>
      </svg>

      <TitleBar>
        <Icon n="app" />
        <h1>{"广联达BIM钢筋算量软件 GGJ2013 - [C:\\Users\\Administrator.PC-20141127NRHM\\Desktop\\白龙村-2018-02-02-19-24-35(2666版).GGJ12]"}</h1>
        <WinButton aria-label="最小化">
          <svg width="10" height="10"><path d="M0 5.500h10" stroke="#888" /></svg>
        </WinButton>
        <WinButton aria-label="还原">
          <svg width="11" height="11"><path d="M.5 2.500h8v8h-8zM2.500 2V.5h8v8H9" fill="none" stroke="#888" /></svg>
        </WinButton>
        <WinButton aria-label="关闭">
          <svg width="11" height="11"><path d="M.5.5l10 10M10.500.5l-10 10" stroke="#888" /></svg>
        </WinButton>
      </TitleBar>

      <MenuRow>
        <Menus>
          {menus.map((m) => (
            <MenuItem key={m}>{m}</MenuItem>
          ))}
          <Gap $w={3} />
          <Tool><Icon n="newdoc" />新建变更</Tool>
          <Gap $w={2} />
          <Caret />
          <Gap $w={3} />
          <Tool><Icon n="mascot" />广小二</Tool>
        </Menus>
        <Strip $grow>
          <Green>识别完毕，未识别到</Green>
          <Spacer />
          <Tool>7298339 <Caret /></Tool>
          <Gap $w={2} />
          <Tool>造价豆:0</Tool>
          <Gap $w={2} />
          <Tool aria-label="通知"><Icon n="bell" /></Tool>
          <Gap $w={24} />
          <More />
        </Strip>
      </MenuRow>

      <ToolRow>
        <Strip $min={149}>
          <Tool aria-label="新建工程"><Icon n="file" /></Tool>
          <Tool aria-label="打开"><Icon n="open" /><Caret /></Tool>
          <Tool aria-label="保存"><Icon n="save" /></Tool>
          <Sep />
          <Tool aria-label="撤销"><Icon n="undo" /><Caret /></Tool>
          <Spacer />
          <More />
        </Strip>
        <Strip>
          <Tool><Icon n="paint" />绘图</Tool>
          <Tool><Sigma>Σ</Sigma>汇总计算</Tool>
          <Gap $w={2} />
          <Tool><Icon n="cloud" />云检查</Tool>
          <Tool disabled $tight><Icon n="align" />平齐板顶</Tool>
          <Tool disabled $tight><Icon n="find" />查找图元</Tool>
          <Tool disabled><Icon n="glasses" />查看钢筋量</Tool>
          <Tool disabled><Icon n="batch" />批量选择</Tool>
          <Gap $w={30} />
          <More />
        </Strip>
        <Strip $grow>
          <Combo $w={62} $framed>
            <Icon n="plane" />
            <select aria-label="视图"><option>二维</option></select>
            <Caret c="#666" />
          </Combo>
          <Tool disabled><Icon n="cube" />俯视<Caret c="#666" /></Tool>
          <Tool disabled><Icon n="orbit" />动态观察</Tool>
          <Tool disabled><Icon n="local" />局部三维</Tool>
          <Sep />
          <Tool disabled $tight><Icon n="full" />全屏</Tool>
          <Tool disabled><Icon n="zoom" />缩放<Caret c="#666" /></Tool>
          <Tool disabled><Icon n="pan" />平移</Tool>
          <Spacer />
          <Tool disabled><Icon n="rotate" />屏幕旋转<Caret c="#666" /></Tool>
          <Sep />
          <Tool disabled $tight><Icon n="floors" />选择楼层</Tool>
          <Gap $w={20} />
          <More />
        </Strip>
      </ToolRow>

      <Body>
        <Nav>
          <NavHead>
            <span>模块导航栏</span>
            <svg width="9" height="10"><path d="M2.500 0v6M2 .5h5M6 0v6M0 6.500h9M4.500 7v3" stroke="#000" fill="none" /></svg>
            <svg width="9" height="9"><path d="M0 0l9 9M9 0L0 9" stroke="#000" /></svg>
          </NavHead>
          <NavButton>工程设置</NavButton>
          <NavButton>绘图输入</NavButton>
          <NavTools>
            <svg width="17" height="16"><path d="M4.500 0v9M0 4.500h9M11.500 6v9M7 10.500h9" stroke="#000" strokeWidth="3" /><path d="M4.500 1v7M1 4.500h7M11.500 7v7M8 10.500h7" stroke="#0a8f86" /></svg>
            <svg width="17" height="16"><path d="M0 4.500h9M7 10.500h9" stroke="#000" strokeWidth="3" /><path d="M1 4.500h7M8 10.500h7" stroke="#0a8f86" /></svg>
          </NavTools>
          <TreeBox>
            <li>
              <Folder name="常用构件类型" open />
              <Leaves>
                {common.map((c) => (
                  <LeafRow key={c[1]} item={c} />
                ))}
              </Leaves>
            </li>
            {folders.map((f) => (
              <li key={f}>
                <Folder name={f} />
              </li>
            ))}
            <li>
              <Folder name="自定义" open />
              <Leaves>
                {custom.map((c) => (
                  <LeafRow key={c[1]} item={c} on={c[0] === "line"} />
                ))}
              </Leaves>
            </li>
          </TreeBox>
          <NavButton>单构件输入</NavButton>
          <NavButton>报表预览</NavButton>
        </Nav>

        <Work>
          <WorkBar>
            <Tool><Icon n="fresh" />新建<Caret /></Tool>
            <Tool><Icon n="del" s={13} />删除</Tool>
            <Tool $tight><Icon n="copy" />复制</Tool>
            <Tool><Icon n="rename" />重命名</Tool>
            <Sep />
            <span>楼层</span>
            <Gap $w={6} />
            <Combo $w={62}>
              <select aria-label="楼层"><option>第7层</option></select>
              <Caret />
            </Combo>
            <Sep />
            <Tool $tight><Icon n="sort" s={15} />排序<Caret /></Tool>
          </WorkBar>
          <WorkRow>
            <ListPane>
              <SearchRow>
                <input aria-label="搜索构件" placeholder="搜索构件..." />
                <Tool aria-label="搜索"><Icon n="search" s={14} /></Tool>
              </SearchRow>
              <ListBox>
                <Items>
                  {members.map((m) => (
                    <li key={m}>
                      <ItemButton>
                        <Dots $w={8} />
                        <ItemLabel $on={m === 330}>
                          <Icon n="gear" s={12} />
                          <Mono>{`ZDYX-${m}`}</Mono>
                        </ItemLabel>
                      </ItemButton>
                    </li>
                  ))}
                </Items>
                <ScrollBar>
                  <Arrow up />
                  <Spacer />
                  <Thumb />
                  <Arrow />
                </ScrollBar>
              </ListBox>
            </ListPane>

            <PropPane>
              <PropTabs><button>属性编辑</button></PropTabs>
              <PropBody>
                <PropFrame>
                  <Table>
                    <thead>
                      <tr><th /><th>属性名称</th></tr>
                    </thead>
                    <tbody>
                      {props.map(([n, name, unit, c]) => (
                        <tr key={n}>
                          <NumCell $on={n === 1} scope="row">{n}</NumCell>
                          <NameCell $c={c} $on={n === 1}>
                            <div>
                              <PlusBox $hide={n < 9} aria-label="展开">
                                <svg width="7" height="7"><path d="M0 3.500h7M3.500 0v7" stroke="#000" /></svg>
                              </PlusBox>
                              <span>{name}{unit && <Mono>{unit}</Mono>}</span>
                            </div>
                          </NameCell>
                        </tr>
                      ))}
                    </tbody>
                  </Table>
                </PropFrame>
              </PropBody>
            </PropPane>
          </WorkRow>
        </Work>

        <Editor>
          <EditorTitle>截面编辑</EditorTitle>
          <Tabs role="tablist">
            <Tab role="tab">截面</Tab>
            <Tab role="tab" $on>配筋</Tab>
          </Tabs>
          <Pane>
            <EdBar $h={29}>
              <Strip>
                <Label>纵筋</Label>
                <Sep />
                <Tool $on>直线</Tool>
                <Tool $tight aria-label="线型"><Caret /></Tool>
                <Combo $w={74}>
                  <select aria-label="钢筋规格"><option>C8@250</option></select>
                  <Caret />
                </Combo>
                <Gap $w={3} />
                <Sep />
                <Tool $on $tight><Icon n="cursor" />选择</Tool>
                <Tool>手动设置参考线</Tool>
                <Tool $tight aria-label="参考线"><Caret /></Tool>
                <Sep />
                <Tool><Icon n="level" />设置标高</Tool>
                <Tool $tight><Icon n="note" />显示标注</Tool>
                <Gap $w={2} />
                <Tool disabled>删除</Tool>
                <Gap $w={6} />
              </Strip>
            </EdBar>
            <EdBar $h={28}>
              <Strip>
                <Label>横筋</Label>
                <Sep />
                <span>钢筋类型:</span>
                <Gap $w={1} />
                <Tool $on>水平</Tool>
                <Tool>垂直</Tool>
              </Strip>
            </EdBar>
            <Canvas><Drawing /></Canvas>
            <EdBar $h={27}>
              <Strip>
                <Tool $on $tight><Icon n="ortho" />正交</Tool>
                <Tool $on $tight><Icon n="dyn" />动态输入</Tool>
              </Strip>
              <Strip>
                <Tool $tight><Icon n="foot" />垂点</Tool>
                <Tool><Icon n="mid" />中点</Tool>
              </Strip>
            </EdBar>
          </Pane>
          <EdStatus>
            <Cell $w={98}><Coords>(X: 404 Y: 713)</Coords></Cell>
            <Cell>
              选择钢筋进行编辑，选择标注进行修改或移动;
              <svg width="12" height="12"><path d="M9 1h2M5 5h2M9 5h2M1 9h2M5 9h2M9 9h2" stroke="#b0b0b0" strokeWidth="2" /></svg>
            </Cell>
          </EdStatus>
        </Editor>
      </Body>

      <Status>
        <Cell $w={148} />
        <Cell $w={78} $mono><span>层高<Mono>:2.8m</Mono></span></Cell>
        <Cell $w={98} $mono><span>底标高<Mono>:20.35m</Mono></span></Cell>
        <Cell $w={48} $mono><Mono>0</Mono></Cell>
        <Cell $mono>名称在当前层当前构件类型下不允许重名</Cell>
        <Cell $w={70} $mono><Mono>429.8 FPS</Mono></Cell>
      </Status>

      <Taskbar>
        <Start aria-label="开始">
          <svg width="16" height="16"><path d="M0 2.200L7 1.200V7.500H0zM8 1l8-1v7.500H8zM0 8.500h7v6.300L0 13.800zM8 8.500h8V16l-8-1z" fill="#fff" /></svg>
        </Start>
        <TaskSearch>
          <svg width="24" height="24"><circle cx="12" cy="12" r="9" fill="none" stroke="#111" strokeWidth="3" /></svg>
          <input aria-label="搜索" placeholder="在这里输入你要搜索的内容" />
          <svg width="16" height="18"><path d="M5.500 3.500c0-3 5-3 5 0v6c0 3-5 3-5 0zM2.500 8v3c0 4 11 4 11 0V8M8 14v3M5 17.500h6" fill="none" stroke="#333" /></svg>
        </TaskSearch>
        <Task $w={48} aria-label="任务视图">
          <svg width="17" height="16"><path d="M.5 0v2.500h11V0M.5 16v-2.500h11V16M.5 4.500h11v7H.5zM15.500 0v4M15.500 10v6" fill="none" stroke="#fff" /><path d="M14 5h3v3h-3z" fill="#fff" /></svg>
        </Task>
        <Task $w={52} aria-label="风车">
          <svg width="22" height="22" viewBox="0 0 22 22">
            <g fill="#dfe3e4">
              <path id="petal" d="M11 11C9 7 9 4 11 1 7-.5 1 .5 1 5.500 1 9 6 11 11 11z" />
              <use href="#petal" transform="rotate(90 11 11)" />
              <use href="#petal" transform="rotate(180 11 11)" />
              <use href="#petal" transform="rotate(270 11 11)" />
            </g>
            <path d="M11 11C9 7 9 4 11 1M11 11c4-2 7-2 10 0M11 11c2 4 2 7 0 10M11 11c-4 2-7 2-10 0" stroke="#04141a" fill="none" strokeWidth="1.200" />
          </svg>
        </Task>
        <Task $w={52} aria-label="浏览器">
          <svg width="24" height="24" viewBox="0 0 24 24"><path d="M6 12.500h13.500c0-9-14-9.500-14 .5 0 8 11 9 13.500 3" fill="none" stroke="#e4e8e9" strokeWidth="3.500" /><path d="M3 22c-4-4 2-16 13-20 5-2 6 1 5 5" fill="none" stroke="#e4e8e9" strokeWidth="1.500" /></svg>
        </Task>
        <Task $w={52} aria-label="消息">
          <svg width="30" height="28" viewBox="0 0 30 28"><path d="M20 10C12 4 2 9 3 17c1 8 14 9 15 2 1-5-6-7-8-3-1 3 3 5 5 2M15 9c-6-2-10 3-9 8 1 5 8 6 10 1M4 22c3 4 10 5 14 1" fill="none" stroke="#c3c8ca" strokeWidth="1.200" /><path d="M22 1c4 0 5 3 5 8l2 2H16l1-2c0-5 1-8 5-8zM21 12h3v2h-3z" fill="#e0a60c" /></svg>
        </Task>
        <Task $w={18} aria-hidden="true" tabIndex={-1}>
          <svg width="5" height="16"><path d="M.5 0v16M3.500 0v16" stroke="#3c484c" /></svg>
        </Task>
        <Task $w={50} aria-label="邮件">
          <svg width="24" height="20" viewBox="0 0 24 20"><path d="M0 6.500L12 0l12 6.500V19H0z" fill="#fff" /><path d="M2 6.500h20L13 11l3 5z" fill="#04141a" /></svg>
        </Task>
        <Gap $w={2} />
        <Task $w={35} $run aria-label="广联达G+">
          <svg width="26" height="26" viewBox="0 0 26 26"><path d="M25 1c-2 5-7 5-11 5-6 0-7 4-6 8 1 5 8 6 9 1 1-3-3-5-5-3 1-5 11-5 11 2 0 7-6 12-12 11C3 24-1 17 2 10 4 4 9 1 15 1c4 0 7 1 10 0z" fill="#2b9cf2" /></svg>
        </Task>
        <Gap $w={5} />
        <Task $w={43} $run $on aria-label="广联达算量"><Icon n="app" s={24} /></Task>
        <Gap $w={5} />
        <Task $w={35} $run aria-label="地图">
          <svg width="24" height="24"><path d="M0 0h24v24H0z" fill="#eee6d4" /><path d="M12 0h12v12H12z" fill="#8fd08a" /><path d="M0 3v9h9z" fill="#6cb0ee" /><path d="M12 24h12V12H12z" fill="#a9c8e8" /><path d="M0 0h5l8 12-2 1z" fill="#c23a4c" /><path d="M0 13l11 0v11H0z" fill="#f4d7a4" /><circle cx="12" cy="12" r="3" fill="#e01010" /><path d="M13 12v11l3-2 2 3 2-1-2-4h4z" fill="#fff" stroke="#333" strokeWidth=".7" /></svg>
        </Task>
        <Gap $w={7} />
        <MiniScroll><Arrow up w={17} /><Arrow w={17} /></MiniScroll>
        <MiniScroll><Arrow up w={17} /><Arrow w={17} /></MiniScroll>
        <Links>链接</Links>
        <Task $w={40} aria-label="人脉">
          <svg width="16" height="16" fill="none" stroke="#fff"><circle cx="11" cy="3.500" r="2.500" /><circle cx="5" cy="8" r="2.500" /><path d="M1 15c0-6 8-6 8 0M9 8c2-3 6-1 6 3" /></svg>
        </Task>
        <Spacer />
        <TwoLine $w={70}>{"40%\nCPU使用"}</TwoLine>
        <Task $w={40} aria-label="WiFi">
          <svg width="20" height="16" fill="none" stroke="#5fd31a" strokeWidth="2.200"><path d="M1 6c5-5 13-5 18 0M4.500 9.500c3-3 8-3 11 0" /><circle cx="10" cy="13" r="1" fill="#5fd31a" /></svg>
        </Task>
        <Task $w={20} aria-label="显示隐藏图标"><svg width="12" height="8"><path d="M1 7l5-5 5 5" fill="none" stroke="#fff" strokeWidth="1.200" /></svg></Task>
        <Task $w={26} aria-label="提醒"><svg width="14" height="14"><path d="M7 0c3 0 4 2 4 5v3l2 3H1l2-3V5c0-3 1-5 4-5zM5 12h4l-2 2z" fill="#fff" /></svg></Task>
        <Task $w={24} aria-label="电源"><svg width="17" height="14" fill="none" stroke="#fff"><path d="M6 4.500h9.500v7H6M1 3.500h5v2c0 2-5 2-5 0zM2.500 1v2M4.500 1v2M3.500 7v4H6" /></svg></Task>
        <Task $w={24} aria-label="网络"><svg width="14" height="14" fill="none" stroke="#ccc" strokeWidth="1.200"><path d="M1 13C1 6 6 1 13 1M4 13c0-5 4-9 9-9M7 13c0-3 3-6 6-6M10 13c0-1 1-3 3-3" /><path d="M11 11h2v2h-2z" fill="#fff" /></svg></Task>
        <Task $w={22} aria-label="音量"><svg width="17" height="14" fill="none" stroke="#fff"><path d="M1 5h2l4-4v12L3 9H1zM9 5c1 1 1 3 0 4M11.500 3c2 2 2 6 0 8" /><path d="M14 1.500c3 3 3 8 0 11" stroke="#777" /></svg></Task>
        <Task $w={33} aria-label="触摸键盘"><svg width="23" height="14" fill="none" stroke="#fff"><path d="M.5.500h22v12H.5z" /><path d="M3 3.500h17M3 6.500h17" strokeDasharray="2 1" /><path d="M5 9.500h13" /></svg></Task>
        <Task $w={25}>中</Task>
        <Task $w={32} aria-label="账户"><svg width="16" height="16"><rect width="16" height="16" rx="2" fill="#2a86ee" /><path d="M8 2c3 0 4 2 4 5 1 2 2 4 0 4l-1 2H5l-1-2c-2 0-1-2 0-4 0-3 1-5 4-5z" fill="#fff" /></svg></Task>
        <TwoLine $w={74}>{"9:02\n2018/9/2"}</TwoLine>
        <Task $w={48} aria-label="操作中心"><svg width="26" height="26"><path d="M1 2h16v13H9l-3 4v-4H1z" fill="#fff" /><path d="M4 5.500h10M4 8.500h10M4 11.500h6" stroke="#111" /><circle cx="16" cy="17" r="8" fill="#3c3c3c" stroke="#999" /><text x="13" y="21" fontSize="11" fontWeight="bold" fill="#fff">1</text></svg></Task>
        <Edge />
      </Taskbar>

      <Ball>69</Ball>
      <Pill>
        <svg width="38" height="38" viewBox="0 0 38 38"><circle cx="19" cy="19" r="19" fill="#24c66c" /><g fill="none" stroke="#fff" strokeWidth="3" strokeLinecap="round"><path d="M6.500 15c7-7 18-7 25 0M10.500 20c5-5 12-5 17 0M14.500 24.500c3-3 6-3 9 0" /></g><circle cx="19" cy="29" r="2" fill="#fff" /></svg>
        <ul>
          <li><svg width="12" height="12"><path d="M4 0v11L1 7" fill="none" stroke="#24b060" strokeWidth="1.800" /><path d="M8 12V1l3 4" fill="none" stroke="#f07818" strokeWidth="1.800" /></svg>0.00K/s</li>
          <li><svg width="12" height="12"><path d="M3 3h7v8H3z" fill="#fff" stroke="#24b060" strokeWidth="1.500" /><path d="M3 6h7v5H3zM5 0h3v2H5z" fill="#24b060" /></svg>0</li>
        </ul>
      </Pill>
    </Page>
  );
}
